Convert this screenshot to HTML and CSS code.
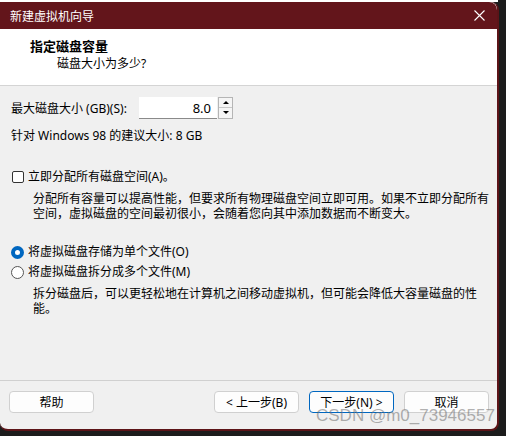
FILE: index.html
```html
<!DOCTYPE html>
<html>
<head>
  <meta charset="utf-8">
  <meta name="viewport" content="width=device-width, initial-scale=1">
  <title>新建虚拟机向导</title>
  <link rel="stylesheet" href="styles.css">
</head>
<body>
  <div class="top-strip"></div>
  <div class="window">
    <div class="titlebar">
      <span class="title">新建虚拟机向导</span>
      <svg class="close" width="11" height="11" viewBox="0 0 11 11">
        <path d="M0.5 0.5 L10.5 10.5 M10.5 0.5 L0.5 10.5" stroke="#fff" stroke-width="1.1"/>
      </svg>
    </div>

    <div class="header">
      <h2>指定磁盘容量</h2>
      <p>磁盘大小为多少?</p>
    </div>

    <div class="content">
      <div class="size-row">
        <label class="size-label">最大磁盘大小 (GB)(S):</label>
        <div class="num-input">8.0</div>
        <div class="spin">
          <span class="spin-btn"><i class="tri up"></i></span>
          <span class="spin-btn"><i class="tri down"></i></span>
        </div>
      </div>
      <p class="hint">针对 Windows 98 的建议大小: 8 GB</p>

      <div class="option check-opt">
        <span class="checkbox"></span>
        <span>立即分配所有磁盘空间(A)。</span>
      </div>
      <p class="desc">分配所有容量可以提高性能，但要求所有物理磁盘空间立即可用。如果不立即分配所有空间，虚拟磁盘的空间最初很小，会随着您向其中添加数据而不断变大。</p>

      <div class="option radio-first">
        <span class="radio checked"></span>
        <span>将虚拟磁盘存储为单个文件(O)</span>
      </div>
      <div class="option radio-second">
        <span class="radio"></span>
        <span>将虚拟磁盘拆分成多个文件(M)</span>
      </div>
      <p class="desc">拆分磁盘后，可以更轻松地在计算机之间移动虚拟机，但可能会降低大容量磁盘的性能。</p>
    </div>

    <div class="footer">
      <button class="btn">帮助</button>
      <div class="spacer"></div>
      <button class="btn">&lt; 上一步(B)</button>
      <button class="btn focused">下一步(N) &gt;</button>
      <button class="btn">取消</button>
    </div>

    <div class="watermark">CSDN @m0_73946557</div>
  </div>
</body>
</html>
```

FILE: styles.css
```css
body {
  margin: 0;
  background: #1c1c1c;
  font-family: "Noto Sans", "Noto Sans CJK SC", sans-serif;
  font-size: 12px;
  color: #000;
  width: 506px;
  height: 436px;
  overflow: hidden;
}

.top-strip {
  width: 498px;
  height: 2px;
  background: #fff;
}

.window {
  position: relative;
  width: 497px;
  height: 427px;
  background: #f0f0f0;
  border-right: 2px solid #5c1418;
  border-bottom: 2px solid #5c1418;
  border-radius: 0 8px 8px 8px;
  overflow: hidden;
}

.titlebar {
  height: 27px;
  background: #63151b;
  display: flex;
  align-items: center;
  justify-content: space-between;
  padding: 0 10px 0 10px;
  border-top-right-radius: 8px;
}

.title {
  color: #fff;
  font-size: 12px;
}

.close {
  margin-right: 2px;
}

.header {
  background: #fff;
  height: 57px;
  border-bottom: 1px solid #d4d4d4;
  box-sizing: border-box;
  padding-top: 8px;
}

.header h2 {
  margin: 0 0 0 30px;
  font-size: 13px;
  font-weight: bold;
  line-height: 18px;
}

.header p {
  margin: 1px 0 0 57px;
  font-size: 12px;
  line-height: 16px;
}

.content {
  padding: 10px 0 0 11px;
  height: 295px;
  border-bottom: 1px solid #d0d0d0;
  box-sizing: border-box;
}

.size-row {
  display: flex;
  align-items: center;
  height: 23px;
}

.size-label {
  width: 128px;
}

.num-input {
  width: 78px;
  height: 22px;
  box-sizing: border-box;
  background: #fff;
  border-bottom: 1px solid #8a8a8a;
  text-align: right;
  padding-right: 6px;
  font-size: 13px;
  line-height: 22px;
}

.spin {
  margin-left: 1px;
  width: 15px;
  height: 22px;
  display: flex;
  flex-direction: column;
  border: 1px solid #b5b5b5;
  box-sizing: border-box;
  background: #f5f5f5;
}

.spin-btn {
  flex: 1;
  display: flex;
  align-items: center;
  justify-content: center;
}

.spin-btn + .spin-btn {
  border-top: 1px solid #c8c8c8;
}

.tri {
  width: 0;
  height: 0;
  border-left: 3px solid transparent;
  border-right: 3px solid transparent;
}

.tri.up {
  border-bottom: 3px solid #000;
}

.tri.down {
  border-top: 3px solid #000;
}

.hint {
  margin: 9px 0 0 0;
  line-height: 16px;
}

.option {
  display: flex;
  align-items: center;
  gap: 4px;
  line-height: 16px;
}

.check-opt {
  margin-top: 25px;
}

.checkbox {
  width: 10px;
  height: 10px;
  border: 1px solid #333;
  border-radius: 2px;
  background: #fff;
  margin-left: 1px;
}

.desc {
  margin: 6px 0 0 22px;
  width: 460px;
  line-height: 15px;
}

.radio-first {
  margin-top: 23px;
}

.radio-second {
  margin-top: 4px;
}

.radio {
  width: 11px;
  height: 11px;
  border: 1px solid #555;
  border-radius: 50%;
  background: #fff;
  box-sizing: content-box;
}

.radio.checked {
  width: 5px;
  height: 5px;
  border: 4px solid #0067c0;
  background: #fff;
}

.footer {
  display: flex;
  align-items: center;
  padding: 10px 8px 0 9px;
  gap: 10px;
}

.spacer {
  flex: 1;
}

.btn {
  width: 85px;
  height: 22px;
  background: #fdfdfd;
  border: 1px solid #d0d0d0;
  border-radius: 4px;
  font-family: "Noto Sans", "Noto Sans CJK SC", sans-serif;
  font-size: 12px;
  color: #000;
  padding: 0;
}

.btn.focused {
  border-color: #0067c0;
}

.watermark {
  position: absolute;
  left: 316px;
  top: 403px;
  white-space: nowrap;
  font-family: "Liberation Sans", sans-serif;
  font-size: 17px;
  line-height: 22px;
  color: rgba(110, 110, 110, 0.55);
}
```
